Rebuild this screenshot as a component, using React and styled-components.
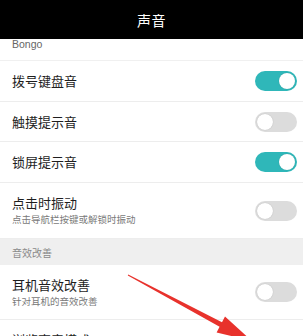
import React from "react";
import styled, { createGlobalStyle } from "styled-components";

const GlobalStyle = createGlobalStyle`
  html, body {
    margin: 0;
    padding: 0;
    background: #fff;
  }
  body {
    font-family: "Noto Sans CJK SC", "Noto Sans", sans-serif;
  }
`;

const Screen = styled.div`
  position: relative;
  width: 303px;
  height: 336px;
  overflow: hidden;
  background: #fff;
`;

const Header = styled.div`
  height: 39px;
  background: #000;
  color: #fff;
  display: flex;
  align-items: center;
  justify-content: center;
  font-size: 14px;
  letter-spacing: 0.5px;
`;

const List = styled.div`
  display: flex;
  flex-direction: column;
`;

const CutRow = styled.div`
  height: 22px;
  padding-left: 12px;
  font-family: "Liberation Sans", "Noto Sans CJK SC", sans-serif;
  font-size: 10.5px;
  line-height: 10px;
  color: #666;
  border-bottom: 1px solid #f0f0f0;
  box-sizing: border-box;
`;

const Row = styled.div`
  height: ${(p) => p.h}px;
  padding: 0 6px 0 12px;
  display: flex;
  align-items: center;
  justify-content: space-between;
  border-bottom: 1px solid #ededed;
  box-sizing: border-box;
`;

const Texts = styled.div`
  display: flex;
  flex-direction: column;
  gap: 2px;
`;

const Title = styled.div`
  font-size: 13px;
  line-height: 16px;
  color: #1e1e1e;
`;

const Sub = styled.div`
  font-size: 9.5px;
  line-height: 13px;
  color: #7a7a7a;
`;

const Section = styled.div`
  height: 26px;
  padding-left: 12px;
  display: flex;
  align-items: center;
  background: #efefef;
  font-size: 10px;
  color: #8a8a8a;
`;

const Toggle = styled.div`
  width: 42px;
  height: 20px;
  border-radius: 10px;
  background: ${(p) => (p.on ? "#2fb7b9" : "#dcdcdc")};
  display: flex;
  align-items: center;
  justify-content: ${(p) => (p.on ? "flex-end" : "flex-start")};
  padding: 0 2px;
  box-sizing: border-box;

  &::after {
    content: "";
    width: 16px;
    height: 16px;
    border-radius: 50%;
    background: #fff;
    box-shadow: 0 0 1px rgba(0, 0, 0, 0.25);
  }
`;

const Arrow = styled.svg`
  position: absolute;
  left: 0;
  top: 0;
  pointer-events: none;
`;

const items = [
  { title: "拨号键盘音", on: true, h: 41 },
  { title: "触摸提示音", on: false, h: 40 },
  { title: "锁屏提示音", on: true, h: 41 },
  { title: "点击时振动", sub: "点击导航栏按键或解锁时振动", on: false, h: 56 },
];

export default function App() {
  return (
    <>
      <GlobalStyle />
      <Screen>
        <Header>声音</Header>
        <List>
          <CutRow>Bongo</CutRow>
          {items.map((it, i) => (
            <Row key={i} h={it.h}>
              <Texts>
                <Title>{it.title}</Title>
                {it.sub && <Sub>{it.sub}</Sub>}
              </Texts>
              <Toggle on={it.on} />
            </Row>
          ))}
          <Section>音效改善</Section>
          <Row h={55}>
            <Texts>
              <Title>耳机音效改善</Title>
              <Sub>针对耳机的音效改善</Sub>
            </Texts>
            <Toggle on={false} />
          </Row>
          <Row h={40}>
            <Texts>
              <Title>浏览声音模式</Title>
            </Texts>
          </Row>
        </List>
        <Arrow width="303" height="336" viewBox="0 0 303 336">
          <polygon
            points="128.2,274.6 222,322.3 225,316.5 251.8,340.9 216.6,332.5 219.6,326.7 127.8,275.4"
            fill="#e8322c"
          />
        </Arrow>
      </Screen>
    </>
  );
}
